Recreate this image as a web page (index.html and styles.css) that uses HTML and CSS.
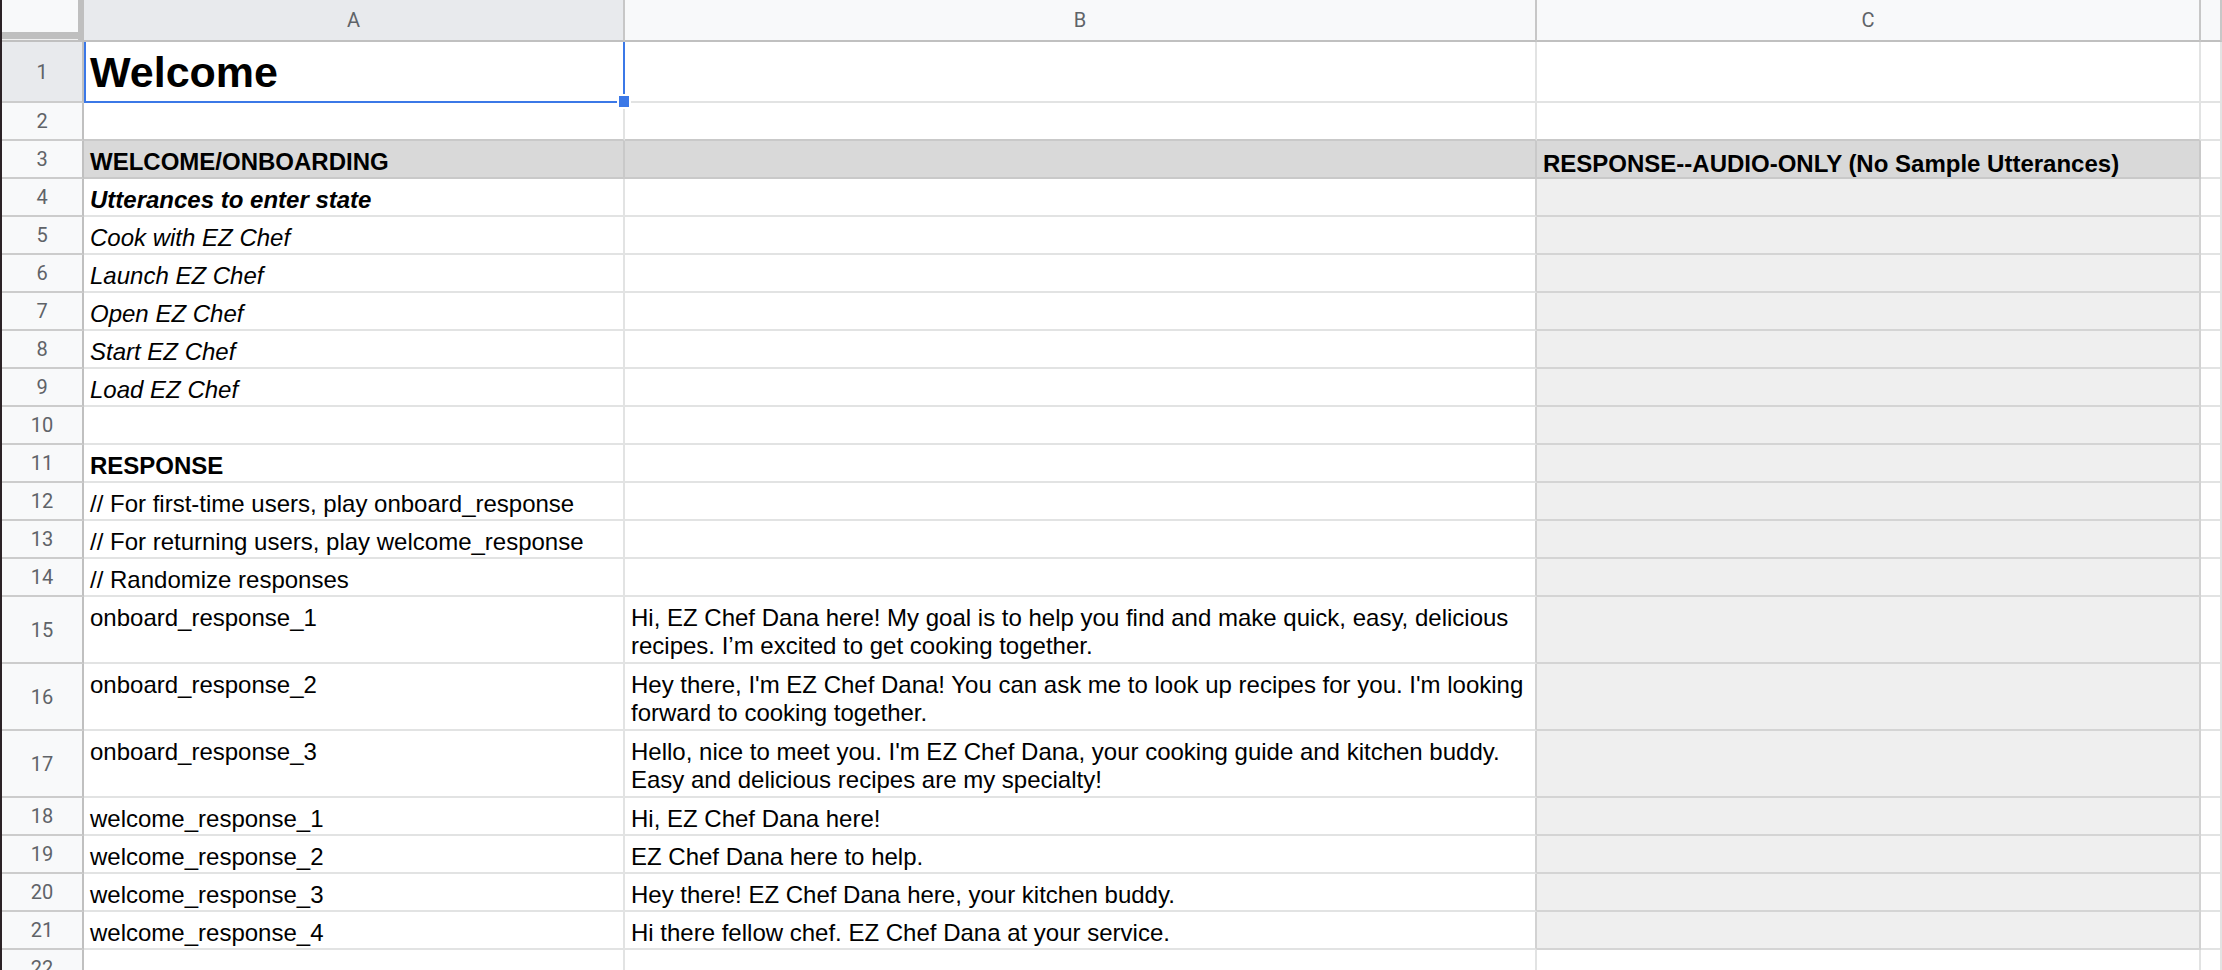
FILE: index.html
```html
<!DOCTYPE html>
<html lang="en">
<head>
<meta charset="utf-8">
<title>Welcome</title>
<link rel="stylesheet" href="styles.css">
</head>
<body>
<div class="sheet">
  <div class="row head">
    <div class="corner"><div class="corner-fill"></div><div class="corner-bar"></div><div class="corner-gap"></div></div>
    <div class="ch sel">A</div>
    <div class="ch">B</div>
    <div class="ch">C</div>
    <div class="ch"></div>
  </div>

  <div class="row r1">
    <div class="rh sel">1</div>
    <div class="cell title selected">Welcome<span class="handle"></span></div>
    <div class="cell"></div>
    <div class="cell"></div>
    <div class="cell"></div>
  </div>

  <div class="row">
    <div class="rh">2</div>
    <div class="cell above"></div>
    <div class="cell above"></div>
    <div class="cell above"></div>
    <div class="cell"></div>
  </div>

  <div class="row">
    <div class="rh">3</div>
    <div class="cell fill bold">WELCOME/ONBOARDING</div>
    <div class="cell fill"></div>
    <div class="cell fill bold lower">RESPONSE--AUDIO-ONLY (No Sample Utterances)</div>
    <div class="cell"></div>
  </div>

  <div class="row">
    <div class="rh">4</div>
    <div class="cell bold italic">Utterances to enter state</div>
    <div class="cell bb"></div>
    <div class="cell g"></div>
    <div class="cell"></div>
  </div>

  <div class="row">
    <div class="rh">5</div>
    <div class="cell italic">Cook with EZ Chef</div>
    <div class="cell bb"></div>
    <div class="cell g"></div>
    <div class="cell"></div>
  </div>

  <div class="row">
    <div class="rh">6</div>
    <div class="cell italic">Launch EZ Chef</div>
    <div class="cell bb"></div>
    <div class="cell g"></div>
    <div class="cell"></div>
  </div>

  <div class="row">
    <div class="rh">7</div>
    <div class="cell italic">Open EZ Chef</div>
    <div class="cell bb"></div>
    <div class="cell g"></div>
    <div class="cell"></div>
  </div>

  <div class="row">
    <div class="rh">8</div>
    <div class="cell italic">Start EZ Chef</div>
    <div class="cell bb"></div>
    <div class="cell g"></div>
    <div class="cell"></div>
  </div>

  <div class="row">
    <div class="rh">9</div>
    <div class="cell italic">Load EZ Chef</div>
    <div class="cell bb"></div>
    <div class="cell g"></div>
    <div class="cell"></div>
  </div>

  <div class="row">
    <div class="rh">10</div>
    <div class="cell"></div>
    <div class="cell bb"></div>
    <div class="cell g"></div>
    <div class="cell"></div>
  </div>

  <div class="row">
    <div class="rh">11</div>
    <div class="cell bold">RESPONSE</div>
    <div class="cell bb"></div>
    <div class="cell g"></div>
    <div class="cell"></div>
  </div>

  <div class="row">
    <div class="rh">12</div>
    <div class="cell">// For first-time users, play onboard_response</div>
    <div class="cell bb"></div>
    <div class="cell g"></div>
    <div class="cell"></div>
  </div>

  <div class="row">
    <div class="rh">13</div>
    <div class="cell">// For returning users, play welcome_response</div>
    <div class="cell bb"></div>
    <div class="cell g"></div>
    <div class="cell"></div>
  </div>

  <div class="row">
    <div class="rh">14</div>
    <div class="cell">// Randomize responses</div>
    <div class="cell bb"></div>
    <div class="cell g"></div>
    <div class="cell"></div>
  </div>

  <div class="row tall">
    <div class="rh">15</div>
    <div class="cell">onboard_response_1</div>
    <div class="cell bb">Hi, EZ Chef Dana here! My goal is to help you find and make quick, easy, delicious<br>recipes. I’m excited to get cooking together.</div>
    <div class="cell g"></div>
    <div class="cell"></div>
  </div>

  <div class="row tall">
    <div class="rh">16</div>
    <div class="cell">onboard_response_2</div>
    <div class="cell bb">Hey there, I'm EZ Chef Dana! You can ask me to look up recipes for you. I'm looking<br>forward to cooking together.</div>
    <div class="cell g"></div>
    <div class="cell"></div>
  </div>

  <div class="row tall">
    <div class="rh">17</div>
    <div class="cell">onboard_response_3</div>
    <div class="cell bb">Hello, nice to meet you. I'm EZ Chef Dana, your cooking guide and kitchen buddy.<br>Easy and delicious recipes are my specialty!</div>
    <div class="cell g"></div>
    <div class="cell"></div>
  </div>

  <div class="row">
    <div class="rh">18</div>
    <div class="cell">welcome_response_1</div>
    <div class="cell bb">Hi, EZ Chef Dana here!</div>
    <div class="cell g"></div>
    <div class="cell"></div>
  </div>

  <div class="row">
    <div class="rh">19</div>
    <div class="cell">welcome_response_2</div>
    <div class="cell bb">EZ Chef Dana here to help.</div>
    <div class="cell g"></div>
    <div class="cell"></div>
  </div>

  <div class="row">
    <div class="rh">20</div>
    <div class="cell">welcome_response_3</div>
    <div class="cell bb">Hey there! EZ Chef Dana here, your kitchen buddy.</div>
    <div class="cell g"></div>
    <div class="cell"></div>
  </div>

  <div class="row">
    <div class="rh">21</div>
    <div class="cell">welcome_response_4</div>
    <div class="cell bb">Hi there fellow chef. EZ Chef Dana at your service.</div>
    <div class="cell g"></div>
    <div class="cell"></div>
  </div>

  <div class="row">
    <div class="rh">22</div>
    <div class="cell"></div>
    <div class="cell"></div>
    <div class="cell"></div>
    <div class="cell"></div>
  </div>
</div>
</body>
</html>
```

FILE: styles.css
```css
html, body {
  margin: 0;
  padding: 0;
  background: #ffffff;
  overflow: hidden;
}

.sheet {
  height: 970px;
  overflow: hidden;
  border-left: 2px solid #2b2226;
  font-family: "Liberation Sans", Arial, sans-serif;
  font-size: 24px;
  color: #000000;
}

.row {
  display: grid;
  grid-template-columns: 82px 541px 912px 664px 1fr;
  height: 38px;
}

.row.head { height: 42px; }
.row.r1 { height: 61px; }
.row.tall { height: 67px; }

.cell {
  box-sizing: border-box;
  border-right: 2px solid #e2e3e3;
  border-bottom: 2px solid #e2e3e3;
  padding: 7px 6px 0 6px;
  line-height: 28px;
  white-space: nowrap;
  overflow: hidden;
}

.bold { font-weight: bold; }
.italic { font-style: italic; }

.title {
  font-size: 43px;
  font-weight: bold;
  line-height: normal;
  padding-top: 6px;
}

.selected {
  position: relative;
  overflow: visible;
}

.selected::after {
  content: "";
  position: absolute;
  left: 0;
  top: 0;
  right: -2px;
  bottom: -2px;
  border-left: 2px solid #3b78e7;
  border-right: 2px solid #3b78e7;
  border-bottom: 2px solid #3b78e7;
  pointer-events: none;
}

.handle {
  position: absolute;
  right: -8px;
  bottom: -8px;
  width: 10px;
  height: 11px;
  background: #3b78e7;
  border: 2px solid #ffffff;
  z-index: 2;
}

.above { border-bottom-color: #c9c9c9; }

.fill {
  background: #d9d9d9;
  border-bottom-color: #c9c9c9;
  border-right-color: #c9c9c9;
}

.lower { padding-top: 9px; }

.bb { border-right-color: #d2d2d2; }

.g {
  background: #efefef;
  border-right-color: #d2d2d2;
  border-bottom-color: #d4d4d4;
}

.rh,
.ch {
  box-sizing: border-box;
  background: #f8f9fa;
  font-family: Roboto, "Liberation Sans", Arial, sans-serif;
  font-size: 20px;
  color: #5f6368;
  display: flex;
  align-items: center;
  justify-content: center;
}

.rh {
  border-right: 2px solid #c0c0c0;
  border-bottom: 2px solid #cccccc;
}

.ch {
  border-right: 2px solid #c7c7c7;
  border-bottom: 2px solid #c0c0c0;
}

.rh.sel,
.ch.sel { background: #e8eaed; }

.corner {
  box-sizing: border-box;
  display: flex;
  flex-direction: column;
  border-right: 6px solid #bfbfbf;
  border-bottom: 2px solid #c0c0c0;
  background: #f8f9fa;
}

.corner-fill { flex: 1; }
.corner-bar { height: 7px; background: #bfbfbf; }
.corner-gap { height: 1px; background: #f1f1f1; }
```
